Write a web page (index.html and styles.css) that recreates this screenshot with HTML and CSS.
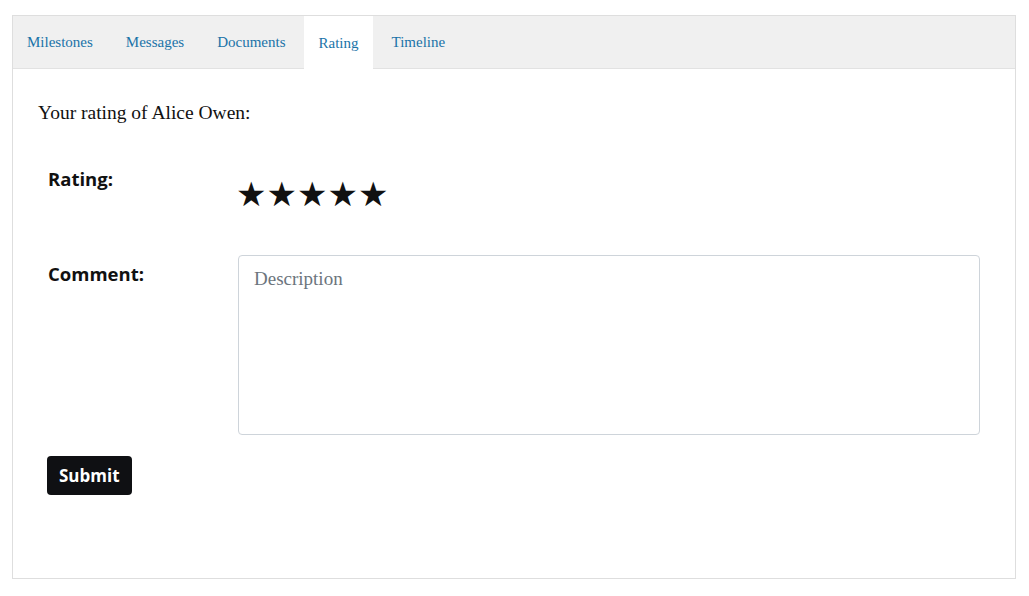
FILE: index.html
```html
<!DOCTYPE html>
<html lang="en">
<head>
  <meta charset="UTF-8">
  <title>Rating</title>
  <link rel="stylesheet" href="styles.css">
</head>
<body>
  <div class="panel">
    <div class="tabs">
      <a class="tab">Milestones</a>
      <a class="tab">Messages</a>
      <a class="tab">Documents</a>
      <a class="tab active">Rating</a>
      <a class="tab">Timeline</a>
    </div>
    <div class="tab-content">
      <p class="intro">Your rating of Alice Owen:</p>
      <form class="rating-form">
        <div class="row">
          <label class="label">Rating:</label>
          <div class="stars">
            <span class="star">&#9733;</span><span class="star">&#9733;</span><span class="star">&#9733;</span><span class="star">&#9733;</span><span class="star">&#9733;</span>
          </div>
        </div>
        <div class="row">
          <label class="label" for="comment">Comment:</label>
          <textarea id="comment" class="comment" placeholder="Description"></textarea>
        </div>
        <button type="button" class="submit-btn">Submit</button>
      </form>
    </div>
  </div>
</body>
</html>
```

FILE: styles.css
```css
body {
  margin: 0;
  padding: 15px 13px 17px 12px;
  font-family: "Liberation Serif", serif;
  background: #fff;
}
.panel {
  border: 1px solid #dedede;
  height: 564px;
  box-sizing: border-box;
}
.tabs {
  display: flex;
  background: #f0f0f0;
  border-bottom: 1px solid #e2e2e2;
  height: 52px;
}
.tab {
  display: flex;
  align-items: center;
  padding: 1px 14px 0 15px;
  margin: 0 2px;
  font-size: 15px;
  color: #1a73a8;
  cursor: pointer;
}
.tab:first-child {
  margin-left: 0;
  padding-left: 14px;
}
.tab.active {
  background: #fff;
  margin-bottom: -1px;
}
.tab-content {
  padding: 0 25px;
}
.intro {
  margin: 33px 0 0;
  font-size: 19.5px;
  color: #111;
}
.rating-form {
  padding: 0 10px;
  margin-top: 43px;
}
.row {
  display: flex;
}
.label {
  width: 190px;
  flex-shrink: 0;
  font-family: "Open Sans", sans-serif;
  font-weight: bold;
  font-size: 18.5px;
  line-height: 24px;
  color: #111;
}
.stars {
  margin: 10px 0 51px -2px;
  font-family: "DejaVu Sans", sans-serif;
  font-size: 34px;
  line-height: 34px;
  color: #111;
}
.comment {
  flex: 1;
  height: 180px;
  box-sizing: border-box;
  margin: -7px 0 0 0;
  padding: 12px 15px;
  border: 1px solid #ced4da;
  border-radius: 4px;
  font-family: "Liberation Serif", serif;
  font-size: 19px;
  resize: none;
}
.comment::placeholder {
  color: #6c757d;
}
.submit-btn {
  margin: 21px 0 0 -1px;
  padding: 8px 12px;
  background: #0f1013;
  color: #fff;
  border: none;
  border-radius: 4px;
  font-family: "Open Sans", sans-serif;
  font-weight: bold;
  font-size: 17px;
  cursor: pointer;
}
```
